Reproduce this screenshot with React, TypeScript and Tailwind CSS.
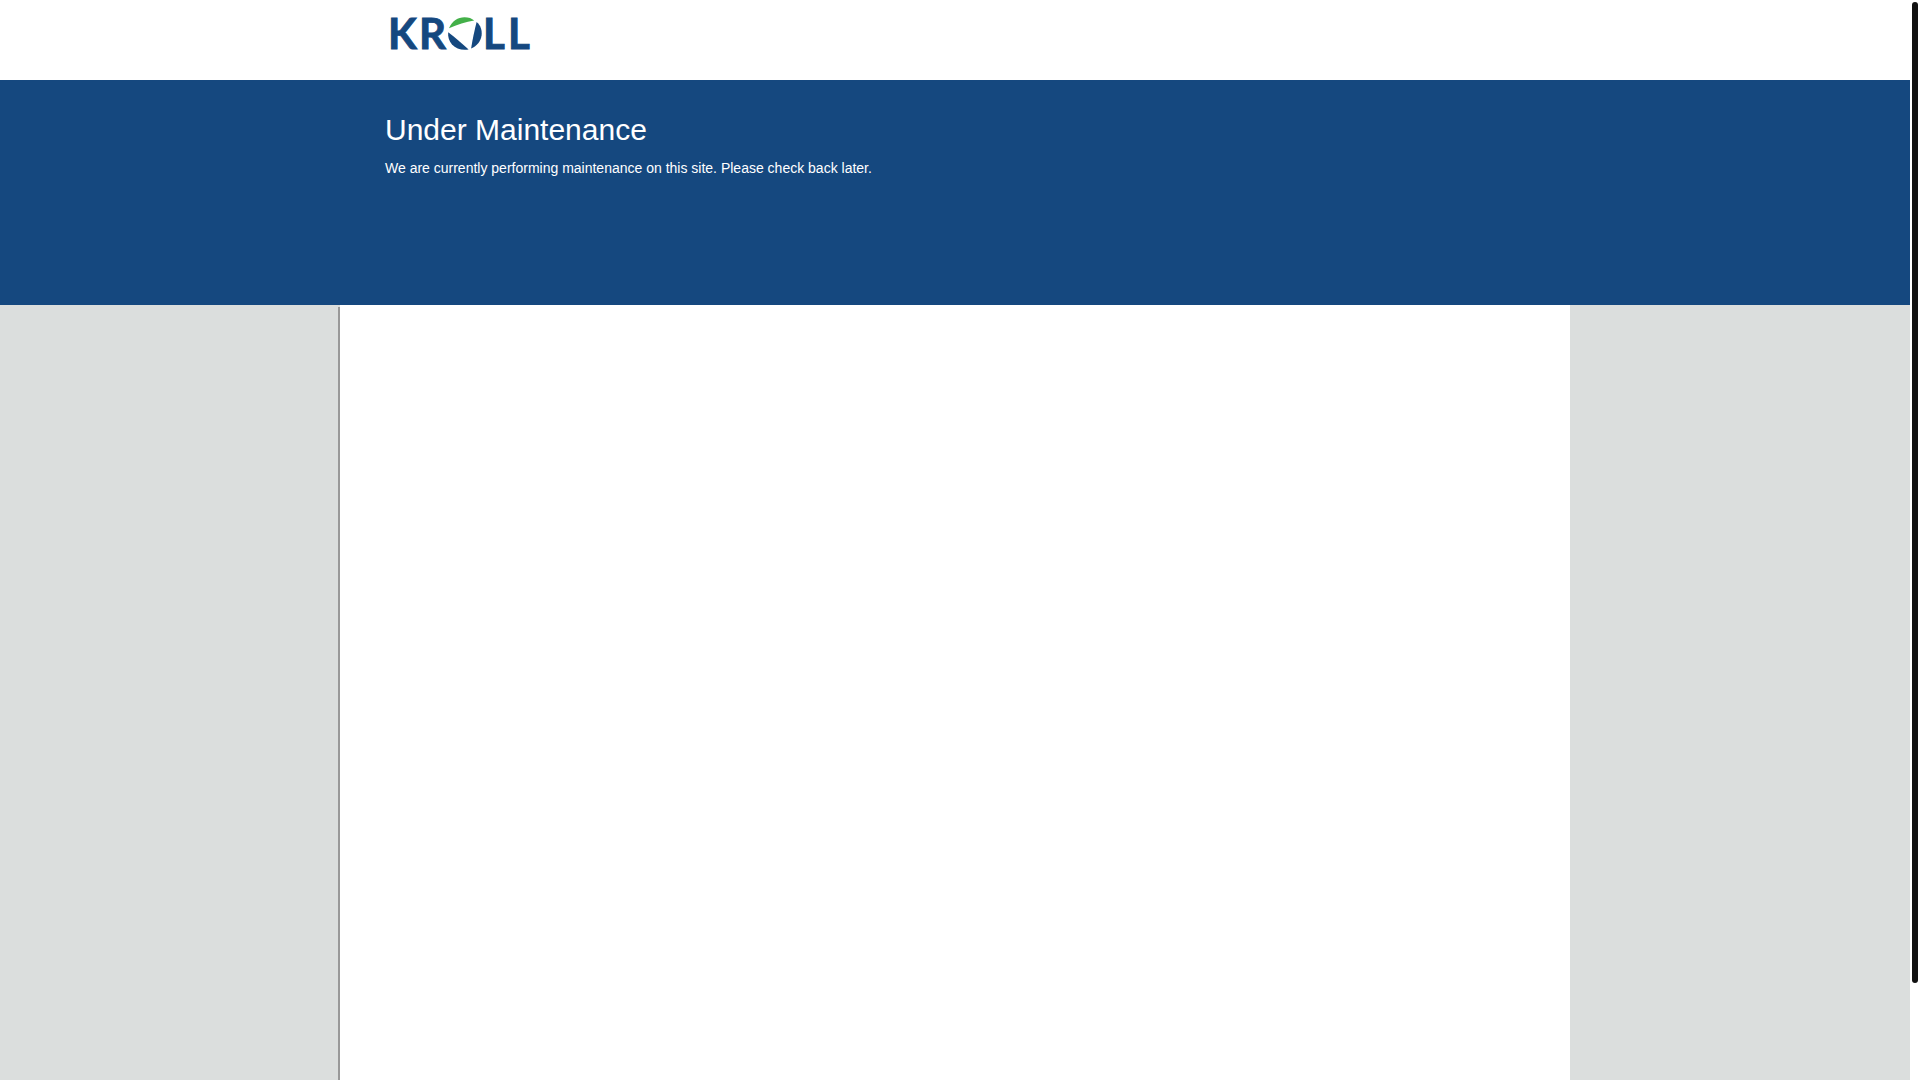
// Maintenance landing page: logo bar, notice banner and an empty content column.

function KrollLogo() {
  return (
    <svg viewBox="0 -10 160 60" className="block h-[60px] w-40" role="img" aria-label="Kroll">
      <g
        fill="#15487f"
        stroke="#15487f"
        strokeWidth="0.9"
        fontFamily="Lato, 'Open Sans', sans-serif"
        fontWeight="700"
        fontSize="42"
      >
        <text x="3" y="35">K</text>
        <text x="34" y="35">R</text>
        <text x="98" y="35">L</text>
        <text x="123" y="35">L</text>
      </g>
      {/* Segmented ring standing in for the O */}
      <path d="M64 14.200C67 7 73 3.200 79.500 3.200C83.500 3.200 87 4.400 89.200 6.600C81 8 72 10.800 64 14.200Z" fill="#43b049" />
      <path d="M63.200 18.200C69.500 23 76.500 29 83.600 35.400C77.500 36.800 71 34.800 67 30.400C64 27 62.700 22.700 63.200 18.200Z" fill="#15487f" />
      <path d="M91.600 8C95.600 11.500 97.200 16 96.600 21.200C95.800 27.200 92 32 86.100 34.600C87.500 25.500 89.500 16.500 91.600 8Z" fill="#15487f" />
    </svg>
  );
}

export default function App() {
  return (
    <div className="flex h-screen overflow-hidden bg-white font-['Liberation_Sans',Arial,sans-serif]">
      <div className="flex min-w-0 flex-1 flex-col bg-[#dbdedd]">
        <header className="bg-white">
          <div className="mx-auto h-20 max-w-[1230px] px-[45px] pt-1">
            <a href="#" className="inline-block">
              <KrollLogo />
            </a>
          </div>
        </header>

        <section className="relative h-[225px] bg-[#15487f] text-white">
          <div className="mx-auto max-w-[1230px] px-[45px] pt-8">
            <h1 className="text-[30px] leading-9">Under Maintenance</h1>
            <p className="mt-2 text-sm leading-6">
              We are currently performing maintenance on this site. Please check back later.
            </p>
          </div>
        </section>

        <main className="mx-auto w-full max-w-[1230px] flex-1 bg-white shadow-[-2px_2px_0_#999]" />
      </div>

      {/* Scroll track */}
      <div className="w-[10px] shrink-0 px-0.5 pt-0.5">
        <div className="h-[981px] max-h-full w-1.5 rounded-sm bg-[#111]" />
      </div>
    </div>
  );
}
